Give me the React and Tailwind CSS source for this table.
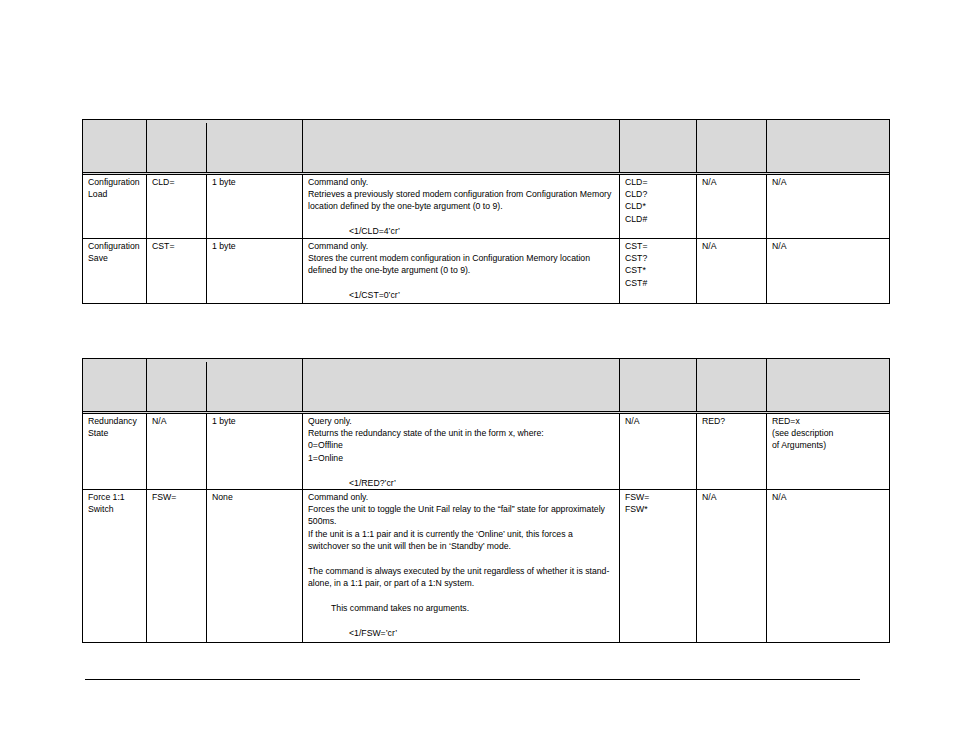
import React from "react";

const COLS = "grid-cols-[63px_60px_96px_317px_77px_70px_123px]";
const FONT = { fontFamily: '"Liberation Sans Narrow", "Arial Narrow", "Liberation Sans", Arial, sans-serif' };

function Lines({ lines }) {
  return (
    <div>
      {lines.map((l, i) => {
        if (l === "") return <div key={i} className="h-[12.4px]" />;
        if (typeof l === "object")
          return (
            <div key={i} className="whitespace-nowrap" style={{ paddingLeft: l.indent }}>
              {l.t}
            </div>
          );
        return (
          <div key={i} className="whitespace-nowrap">
            {l}
          </div>
        );
      })}
    </div>
  );
}

function Header() {
  return (
    <div className={`grid ${COLS} h-[55px] bg-[#d9d9d9] border-b-[3px] border-double border-black`}>
      <div />
      <div className="border-l border-black" />
      <div className="flex flex-row">
        <div className="mt-[3px] w-px bg-black" />
      </div>
      <div className="border-l border-black" />
      <div className="border-l border-black" />
      <div className="border-l border-black" />
      <div className="border-l border-black" />
    </div>
  );
}

function Row({ cells, h, last }) {
  return (
    <div className={`grid ${COLS} ${last ? "" : "border-b border-black"}`} style={{ height: h }}>
      {cells.map((c, i) => (
        <div key={i} className={`${i > 0 ? "border-l border-black" : ""} pl-[5px] pt-[0.5px] overflow-hidden`}>
          <Lines lines={c} />
        </div>
      ))}
    </div>
  );
}

function Table({ rows }) {
  return (
    <div className="w-[808px] border border-black">
      <Header />
      {rows.map((r, i) => (
        <Row key={i} cells={r.cells} h={r.h} last={i === rows.length - 1} />
      ))}
    </div>
  );
}

export default function App() {
  const t1 = [
    {
      h: 64,
      cells: [
        ["Configuration", "Load"],
        ["CLD="],
        ["1 byte"],
        [
          "Command only.",
          "Retrieves a previously stored modem configuration from Configuration Memory",
          "location defined by the one-byte argument (0 to 9).",
          "",
          { t: "<1/CLD=4\u2019cr\u2019", indent: 41 },
        ],
        ["CLD=", "CLD?", "CLD*", "CLD#"],
        ["N/A"],
        ["N/A"],
      ],
    },
    {
      h: 64,
      cells: [
        ["Configuration", "Save"],
        ["CST="],
        ["1 byte"],
        [
          "Command only.",
          "Stores the current modem configuration in Configuration Memory location",
          "defined by the one-byte argument (0 to 9).",
          "",
          { t: "<1/CST=0\u2019cr\u2019", indent: 41 },
        ],
        ["CST=", "CST?", "CST*", "CST#"],
        ["N/A"],
        ["N/A"],
      ],
    },
  ];

  const t2 = [
    {
      h: 76,
      cells: [
        ["Redundancy", "State"],
        ["N/A"],
        ["1 byte"],
        [
          "Query only.",
          "Returns the redundancy state of the unit in the form x, where:",
          "0=Offline",
          "1=Online",
          "",
          { t: "<1/RED?\u2019cr\u2019", indent: 41 },
        ],
        ["N/A"],
        ["RED?"],
        ["RED=x", "(see description", "of Arguments)"],
      ],
    },
    {
      h: 152,
      cells: [
        ["Force 1:1", "Switch"],
        ["FSW="],
        ["None"],
        [
          "Command only.",
          "Forces the unit to toggle the Unit Fail relay to the \u201cfail\u201d state for approximately",
          "500ms.",
          "If the unit is a 1:1 pair and it is currently the \u2018Online\u2019 unit, this forces a",
          "switchover so the unit will then be in \u2018Standby\u2019 mode.",
          "",
          "The command is always executed by the unit regardless of whether it is stand-",
          "alone, in a 1:1 pair, or part of a 1:N system.",
          "",
          { t: "This command takes no arguments.", indent: 23 },
          "",
          { t: "<1/FSW=\u2019cr\u2019", indent: 41 },
        ],
        ["FSW=", "FSW*"],
        ["N/A"],
        ["N/A"],
      ],
    },
  ];

  return (
    <div className="w-[954px] h-[738px] bg-white text-black text-[8.7px] leading-[12.4px]" style={FONT}>
      <div className="pt-[119px] pl-[82px] flex flex-col">
        <Table rows={t1} />
        <div className="h-[54px]" />
        <Table rows={t2} />
      </div>
      <div className="ml-[85px] mt-[36px] w-[775px] h-px bg-black" />
    </div>
  );
}
